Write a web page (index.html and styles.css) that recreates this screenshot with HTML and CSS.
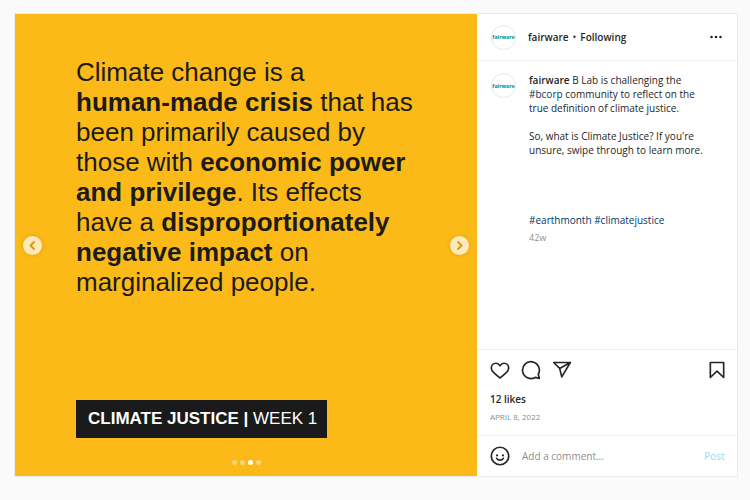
FILE: index.html
```html
<!DOCTYPE html>
<html lang="en">
<head>
    <meta charset="UTF-8">
    <title>fairware</title>
    <link rel="stylesheet" href="styles.css">
</head>
<body>
    <article class="post">
        <div class="photo">
            <p class="quote">
                Climate change is a<br>
                <b>human-made crisis</b> that has<br>
                been primarily caused by<br>
                those with <b>economic power</b><br>
                <b>and privilege</b>. Its effects<br>
                have a <b>disproportionately</b><br>
                <b>negative impact</b> on<br>
                marginalized people.
            </p>
            <div class="week"><b>CLIMATE JUSTICE |</b> WEEK 1</div>
            <button class="arrow prev" type="button" aria-label="Previous">
                <svg width="19" height="19" viewBox="0 0 19 19"><path d="M11 6L7.500 9.500l3.500 3.500"/></svg>
            </button>
            <button class="arrow next" type="button" aria-label="Next">
                <svg width="19" height="19" viewBox="0 0 19 19"><path d="M8 6l3.500 3.500L8 13"/></svg>
            </button>
            <div class="dots"><i></i><i></i><i class="selected"></i><i></i></div>
        </div>
        <div class="side">
            <header class="head">
                <a class="avatar" href="#">fairware</a>
                <div class="who">
                    <a class="name" href="#">fairware</a>
                    <span>•</span>
                    <button class="following" type="button">Following</button>
                </div>
                <button class="more" type="button" aria-label="More options">
                    <svg width="14" height="14" viewBox="0 0 14 14"><circle cx="2.5" cy="7" r="1.300"/><circle cx="7" cy="7" r="1.300"/><circle cx="11.500" cy="7" r="1.300"/></svg>
                </button>
            </header>
            <div class="comments">
                <a class="avatar" href="#">fairware</a>
                <div class="caption">
                    <p><a class="name" href="#">fairware</a> B Lab is challenging the<br><a class="tag" href="#">#bcorp</a> community to reflect on the<br>true definition of climate justice.</p>
                    <p>So, what is Climate Justice? If you're<br>unsure, swipe through to learn more.</p>
                    <p class="tags"><a class="tag" href="#">#earthmonth</a> <a class="tag" href="#">#climatejustice</a></p>
                    <time class="age">42w</time>
                </div>
            </div>
            <div class="actions">
                <div class="icons">
                    <button type="button" aria-label="Like">
                        <svg width="20" height="20" viewBox="0 0 24 24"><path d="M16.8 3.9c-2.1 0-3.7 1.2-4.8 3.1-1.1-1.9-2.7-3.1-4.8-3.1C4 3.9 1.6 6.300 1.600 9.600c0 3.500 2.600 5.400 5.200 7.700 2.500 2.200 3.900 3.400 5.200 4.300 1.300-.9 2.700-2.100 5.200-4.300 2.600-2.300 5.200-4.200 5.200-7.700 0-3.300-2.400-5.700-5.600-5.700z"/></svg>
                    </button>
                    <button type="button" aria-label="Comment">
                        <svg width="20" height="20" viewBox="0 0 24 24"><path d="M20.700 17.200a10.100 10.100 0 1 0-3.700 3.700l5 1.200z"/></svg>
                    </button>
                    <button type="button" aria-label="Share">
                        <svg width="20" height="20" viewBox="0 0 24 24"><path d="M22 3H2l7.200 7.100L11.700 20.300zM9.200 10.100L22 3"/></svg>
                    </button>
                    <button class="save" type="button" aria-label="Save">
                        <svg width="20" height="20" viewBox="0 0 24 24"><path d="M20 21l-8-7.600L4 21V3h16z"/></svg>
                    </button>
                </div>
                <a class="likes" href="#">12 likes</a>
                <time class="date">APRIL 8, 2022</time>
            </div>
            <form class="reply">
                <button type="button" aria-label="Emoji">
                    <svg width="20" height="20" viewBox="0 0 24 24"><circle cx="12" cy="12" r="10.500"/><path d="M8 14.800c.8 1.400 2.200 2.200 4 2.200s3.200-.8 4-2.200"/><circle class="eye" cx="8.500" cy="11.300" r="1.300"/><circle class="eye" cx="15.500" cy="11.300" r="1.300"/></svg>
                </button>
                <input type="text" placeholder="Add a comment..." aria-label="Add a comment">
                <button class="send" type="submit" disabled>Post</button>
            </form>
        </div>
    </article>
</body>
</html>
```
FILE: styles.css
```css
*{
    margin: 0;
    padding: 0;
    box-sizing: border-box;
}
body{
    padding: 13px 12px 0 14px;
    background: #fafafa;
    color: #262626;
    font: 10px/14px "Open Sans", "Noto Sans", sans-serif;
}
a{
    color: inherit;
    text-decoration: none;
}
button{
    border: none;
    background: none;
    color: inherit;
    font: inherit;
    cursor: pointer;
}
svg{
    display: block;
    fill: none;
    stroke: #262626;
    stroke-width: 2;
    stroke-linejoin: round;
    stroke-linecap: round;
}
.post{
    display: flex;
    border: 1px solid #ebebeb;
    background: #fff;
}
.photo{
    position: relative;
    display: flex;
    flex: 1;
    flex-direction: column;
    align-items: flex-start;
    justify-content: space-between;
    aspect-ratio: 1;
    padding: 43px 0 38px 61px;
    background: #fbba18;
    color: #1b1b19;
    font-family: "Liberation Sans", Arial, sans-serif;
}
.quote{
    font-size: 26px;
    line-height: 30px;
    white-space: nowrap;
}
.week{
    padding: 0 10px 0 12px;
    background: #1a1a1a;
    color: #fff;
    font-size: 17px;
    line-height: 38px;
}
.arrow{
    position: absolute;
    top: 50%;
    margin-top: -9px;
    border-radius: 50%;
    background: #fdeabb;
    box-shadow: 0 0 4px rgba(150, 90, 0, .25);
}
.arrow svg{
    stroke: #d99a1c;
}
.prev{
    left: 8px;
}
.next{
    right: 8px;
}
.dots{
    position: absolute;
    right: 0;
    bottom: 11px;
    left: 0;
    display: flex;
    justify-content: center;
    gap: 3px;
}
.dots i{
    width: 5px;
    height: 5px;
    border-radius: 50%;
    background: #fdd678;
}
.dots .selected{
    background: #fff;
}
.side{
    display: flex;
    flex-direction: column;
    width: 260px;
}
.head{
    display: flex;
    align-items: center;
    height: 47px;
    padding: 0 14px;
    border-bottom: 1px solid #efefef;
}
.avatar{
    display: flex;
    flex-shrink: 0;
    align-items: center;
    justify-content: center;
    width: 25px;
    height: 25px;
    border: 1px solid #e8e8e8;
    border-radius: 50%;
    color: #16a0a3;
    font-size: 5px;
    font-weight: 800;
}
.who{
    display: flex;
    flex: 1;
    gap: 4px;
    margin-left: 12px;
}
.name,.following,.likes{
    font-weight: 600;
}
.more svg{
    fill: #262626;
    stroke: none;
}
.comments{
    display: flex;
    flex: 1;
    gap: 13px;
    padding: 12px 14px 0;
}
.caption{
    white-space: nowrap;
}
.caption p{
    margin-bottom: 14px;
}
.caption .tags{
    margin: 56px 0 4px;
}
.tag{
    color: #00376b;
}
.age{
    display: block;
    color: #8e8e8e;
    font-size: 9px;
}
.actions{
    padding: 10px 10px 11px 13px;
    border-top: 1px solid #efefef;
}
.icons{
    display: flex;
    gap: 11px;
    margin-bottom: 12px;
}
.save{
    margin-left: auto;
}
.likes,.date{
    display: block;
}
.date{
    margin-top: 4px;
    color: #8e8e8e;
    font-size: 8px;
}
.reply{
    display: flex;
    align-items: center;
    gap: 12px;
    height: 41px;
    padding: 0 12px 0 13px;
    border-top: 1px solid #efefef;
}
.reply input{
    flex: 1;
    min-width: 0;
    border: none;
    outline: none;
    background: none;
    color: #262626;
    font: inherit;
}
.reply input::placeholder{
    color: #8e8e8e;
}
.reply .eye{
    fill: #262626;
    stroke: none;
}
.reply .send{
    color: #b2dffc;
    font-weight: 600;
}
```
